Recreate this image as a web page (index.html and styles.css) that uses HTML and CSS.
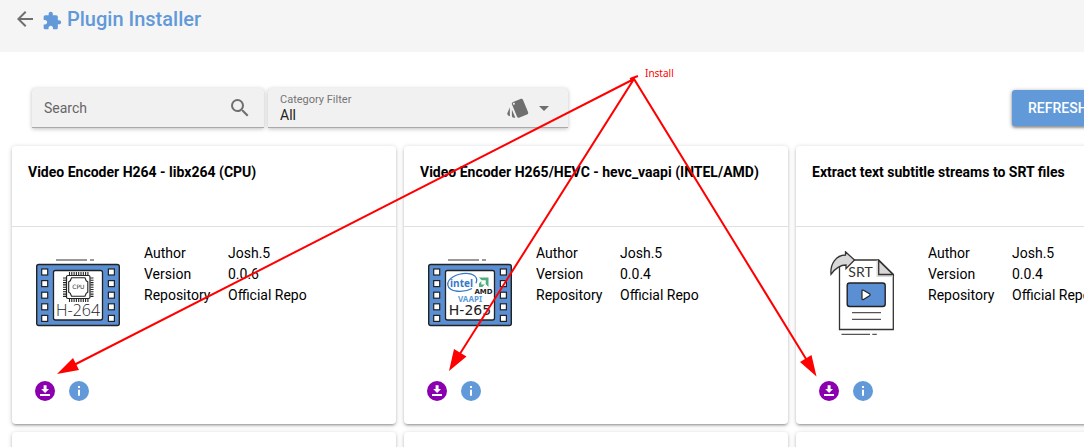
FILE: index.html
```html
<!DOCTYPE html>
<html lang="en">
<head>
<meta charset="utf-8">
<title>Plugin Installer</title>
<link rel="stylesheet" href="styles.css">
</head>
<body>
<svg class="defs" aria-hidden="true">
  <defs>
    <g id="film">
      <path d="M20 9H51M54 9H58" fill="none" stroke="#333"/>
      <rect x=".7" y="13.5" width="82.6" height="61" rx="2" fill="#5b8fd3" stroke="#222" stroke-width="1.4"/>
      <rect x="17.5" y="19.5" width="49" height="49.5" rx="2" fill="#fff" stroke="#222" stroke-width="1.3"/>
      <g fill="#fff" stroke="#222" stroke-width="1.2">
        <rect x="5.7" y="18" width="6" height="6"/><rect x="5.7" y="29.6" width="6" height="6"/><rect x="5.7" y="41.2" width="6" height="6"/><rect x="5.7" y="52.8" width="6" height="6"/><rect x="5.7" y="64.4" width="6" height="6"/>
        <rect x="72.4" y="18" width="6" height="6"/><rect x="72.4" y="29.6" width="6" height="6"/><rect x="72.4" y="41.2" width="6" height="6"/><rect x="72.4" y="52.8" width="6" height="6"/><rect x="72.4" y="64.4" width="6" height="6"/>
      </g>
    </g>
    <g id="download">
      <circle cx="10" cy="10" r="10" fill="#8a00ae"/>
      <path d="M8.6 4.3h3V8H14l-3.9 4L6.2 8h2.4zM5 13h10v2H5z" fill="#fff"/>
    </g>
    <g id="info">
      <circle cx="10" cy="10" r="10" fill="#6199d9"/>
      <path d="M9 5h2v2H9zM9 8.8h2v6H9z" fill="#fff"/>
    </g>
  </defs>
</svg>

<header class="header">
  <button class="back" aria-label="Back"><svg class="icon" viewBox="0 0 24 24"><path d="M20 11H7.83l5.59-5.59L12 4l-8 8 8 8 1.41-1.41L7.83 13H20v-2z"/></svg></button>
  <svg class="icon puzzle" viewBox="0 0 24 24"><path d="M20.500 11H19V7c0-1.100-.9-2-2-2h-4V3.500C13 2.120 11.880 1 10.500 1S8 2.120 8 3.500V5H4c-1.100 0-1.990.9-1.990 2v3.800H3.500c1.490 0 2.700 1.210 2.700 2.700s-1.210 2.700-2.700 2.700H2V20c0 1.100.9 2 2 2h3.800v-1.500c0-1.490 1.210-2.700 2.700-2.700s2.700 1.210 2.700 2.700V22H17c1.100 0 2-.9 2-2v-4h1.500c1.380 0 2.500-1.120 2.500-2.500S21.880 11 20.500 11z"/></svg>
  <h1 class="title">Plugin Installer</h1>
</header>

<main class="page">
  <div class="toolbar">
    <div class="field search">
      <input class="search-input" type="text" placeholder="Search" aria-label="Search">
      <svg class="icon" viewBox="0 0 24 24"><path d="M15.500 14h-.79l-.28-.27A6.471 6.471 0 0 0 16 9.500 6.500 6.500 0 1 0 9.500 16c1.610 0 3.090-.59 4.230-1.570l.27.28v.79l5 4.990L20.490 19l-4.990-5zm-6 0C7.010 14 5 11.990 5 9.500S7.010 5 9.500 5 14 7.010 14 9.500 11.990 14 9.500 14z"/></svg>
    </div>
    <div class="field filter">
      <div class="filter-body">
        <label class="filter-label" for="category">Category Filter</label>
        <select class="filter-select" id="category"><option>All</option></select>
      </div>
      <svg class="icon" viewBox="0 0 24 24"><path d="M2.530 19.650l1.340.56v-9.030l-2.430 5.860c-.41 1.020.08 2.190 1.090 2.610zm19.500-3.700L17.070 3.980a2.013 2.013 0 0 0-1.810-1.230c-.26 0-.53.04-.79.15L7.100 5.950a1.999 1.999 0 0 0-1.080 2.600l4.960 11.970a1.998 1.998 0 0 0 2.600 1.080l7.360-3.050a1.994 1.994 0 0 0 1.090-2.600zM7.880 8.750c-.55 0-1-.45-1-1s.45-1 1-1 1 .45 1 1-.45 1-1 1zm-2 11c0 1.100.9 2 2 2h1.450l-3.450-8.340v6.340z"/></svg>
      <svg class="icon" viewBox="0 0 24 24"><path d="M7 10l5 5 5-5z"/></svg>
    </div>
    <button class="refresh">REFRESH</button>
  </div>

  <div class="cards">
    <article class="card">
      <h2 class="card-title">Video Encoder H264 - libx264 (CPU)</h2>
      <div class="card-body">
        <svg class="art" viewBox="0 0 84 84">
          <use href="#film"/>
          <path d="M33.500 24v-3M35.800 24v-3M38.100 24v-3M40.400 24v-3M42.700 24v-3M45 24v-3M47.300 24v-3M49.600 24v-3M51.900 24v-3M33.500 51v-3M35.800 51v-3M38.100 51v-3M40.400 51v-3M42.700 51v-3M45 51v-3M47.300 51v-3M49.600 51v-3M51.900 51v-3M27 27h3M27 29.300h3M27 31.600h3M27 33.900h3M27 36.200h3M27 38.500h3M27 40.800h3M27 43.100h3M27 45.400h3M54.500 27h3M54.500 29.300h3M54.500 31.600h3M54.500 33.900h3M54.500 36.200h3M54.500 38.500h3M54.500 40.800h3M54.500 43.100h3M54.500 45.400h3" stroke="#222" stroke-width="1.100"/>
          <rect x="30.500" y="24.500" width="23.500" height="23" rx="1.500" fill="#fff" stroke="#222" stroke-width="1.200"/>
          <path d="M35.500 26.800h13.500l1.200 3 1.600 1v10.500l-1.600 1-1.200 3H35.500l-1.200-3-1.600-1V30.800l1.600-1z" fill="#fff" stroke="#222" stroke-width="1.100"/>
          <text class="art-cpu" x="42.300" y="38" text-anchor="middle">CPU</text>
          <text class="art-codec light" x="42" y="65" text-anchor="middle">H-264</text>
        </svg>
        <table class="facts">
          <tr><th scope="row">Author</th><td>Josh.5</td></tr>
          <tr><th scope="row">Version</th><td>0.0.6</td></tr>
          <tr><th scope="row">Repository</th><td>Official Repo</td></tr>
        </table>
      </div>
      <div class="actions">
        <button class="action" aria-label="Install"><svg viewBox="0 0 20 20"><use href="#download"/></svg></button>
        <button class="action" aria-label="Info"><svg viewBox="0 0 20 20"><use href="#info"/></svg></button>
      </div>
    </article>

    <article class="card">
      <h2 class="card-title">Video Encoder H265/HEVC - hevc_vaapi (INTEL/AMD)</h2>
      <div class="card-body">
        <svg class="art" viewBox="0 0 84 84">
          <use href="#film"/>
          <path d="M44 37.500C36 42 21 41.500 19.800 34 19 27.500 29 22.300 38 22.300c8 0 12.500 4.200 10 10" fill="none" stroke="#3579c6" stroke-width="1.300"/>
          <text class="art-intel" x="33.500" y="35.500" text-anchor="middle">intel</text>
          <path d="M51 26.500h9.500V36l-2.800-2.800v-4h-4zM53.300 30v3.500h3.500L54.300 36H51v-3.500z" fill="#4fae7c"/>
          <text class="art-amd" x="55.500" y="43" text-anchor="middle">AMD</text>
          <text class="art-vaapi" x="42" y="51" text-anchor="middle">VAAPI</text>
          <text class="art-codec" x="42" y="64" text-anchor="middle">H-265</text>
        </svg>
        <table class="facts">
          <tr><th scope="row">Author</th><td>Josh.5</td></tr>
          <tr><th scope="row">Version</th><td>0.0.4</td></tr>
          <tr><th scope="row">Repository</th><td>Official Repo</td></tr>
        </table>
      </div>
      <div class="actions">
        <button class="action" aria-label="Install"><svg viewBox="0 0 20 20"><use href="#download"/></svg></button>
        <button class="action" aria-label="Info"><svg viewBox="0 0 20 20"><use href="#info"/></svg></button>
      </div>
    </article>

    <article class="card">
      <h2 class="card-title">Extract text subtitle streams to SRT files</h2>
      <div class="card-body">
        <svg class="art" viewBox="0 0 84 84">
          <path d="M19.500 9h39.200l14.600 14.200v55.300H19.500z" fill="#fff" stroke="#333" stroke-width="1.300"/>
          <path d="M56.500 9.600h2.200v13.900h14V26H56.500z" fill="#d8d8d8"/>
          <path d="M58.700 9.500v14h14.300z" fill="#d8d8d8" stroke="#333" stroke-width="1.300"/>
          <path d="M11 23.300C10 13 16 4 25.500 4V.8L34.500 9 26 17.700V14c-6 0-10.500 3-15 9.300z" fill="#d8d8d8" stroke="#333" stroke-width="1.300"/>
          <text class="art-srt" x="40.500" y="26" text-anchor="middle">SRT</text>
          <rect x="27.200" y="32" width="38" height="23.500" rx="2.500" fill="#5b8fd3" stroke="#222" stroke-width="1.400"/>
          <path d="M42 40q0-1.500 1.500-.8l6 3.600q1.200 1 0 2l-6 3.600q-1.500.7-1.500-.8z" fill="#fff" stroke="#222" stroke-width="1.200"/>
          <path d="M32 61.700h29M32 68.300h29M21.500 83.300H50M52.300 83.300h4.500" stroke="#555" stroke-width="1.200"/>
        </svg>
        <table class="facts">
          <tr><th scope="row">Author</th><td>Josh.5</td></tr>
          <tr><th scope="row">Version</th><td>0.0.4</td></tr>
          <tr><th scope="row">Repository</th><td>Official Repo</td></tr>
        </table>
      </div>
      <div class="actions">
        <button class="action" aria-label="Install"><svg viewBox="0 0 20 20"><use href="#download"/></svg></button>
        <button class="action" aria-label="Info"><svg viewBox="0 0 20 20"><use href="#info"/></svg></button>
      </div>
    </article>

    <article class="card"></article>
    <article class="card"></article>
    <article class="card"></article>
  </div>
</main>

<!-- Callout arrows pointing at the install buttons -->
<svg class="callout" width="1084" height="447" viewBox="0 0 1084 447">
  <path d="M70 367L634 79M456 360L634 79L811 367M630 79L638 76" fill="none" stroke="#f00" stroke-width="2"/>
  <path d="M57 374L73 358L79 370zM449 371L454 349L466.500 356.500zM816.500 376.500L800 362L811.500 355z" fill="#f00"/>
  <text class="callout-text" x="645" y="77">Install</text>
</svg>
</body>
</html>
```

FILE: styles.css
```css
* {
  box-sizing: border-box;
}

body {
  margin: 0;
  height: 100vh;
  overflow: hidden;
  position: relative;
  background: #fff;
  color: #000;
  font: 14px/21px Roboto, sans-serif;
}

button {
  border: 0;
  padding: 0;
  background: none;
  font: inherit;
  cursor: pointer;
}

svg {
  display: block;
}

.defs {
  position: absolute;
  width: 0;
  height: 0;
}

.icon {
  width: 24px;
  height: 24px;
  flex: none;
  fill: #6f6f6f;
}

.header {
  display: flex;
  align-items: flex-start;
  height: 52px;
  padding: 7px 13px;
  background: #f5f5f5;
}

.puzzle {
  width: 20px;
  height: 20px;
  margin: 4px 5px 0;
  fill: #6199d9;
}

.title {
  margin: 0;
  color: #6199d9;
  font-size: 20px;
  font-weight: 500;
  line-height: 24px;
}

.page {
  padding: 36px 12px 0;
}

.toolbar {
  display: flex;
  align-items: center;
  gap: 4px;
  min-width: 1160px;
  padding: 0 0 0 20px;
}

.field {
  display: flex;
  align-items: center;
  height: 40px;
  padding: 0 12px;
  background: #f1f1f1;
  border-radius: 4px 4px 0 0;
  box-shadow: inset 0 -1px #aaa, 0 1px 4px rgba(0, 0, 0, 0.25);
}

.search {
  width: 232px;
}

.search-input {
  flex: 1;
  min-width: 0;
  border: 0;
  padding: 0;
  background: none;
  font: inherit;
  outline: 0;
}

.search-input::placeholder {
  color: #666;
  opacity: 1;
}

.filter {
  width: 300px;
  gap: 2px;
}

.filter-body {
  display: flex;
  flex: 1;
  flex-direction: column;
}

.filter-label {
  color: #757575;
  font-size: 11px;
  line-height: 14px;
}

.filter-select {
  appearance: none;
  border: 0;
  padding: 0;
  background: none;
  color: #222;
  font: inherit;
  line-height: 16px;
}

.refresh {
  width: 160px;
  height: 36px;
  margin-left: auto;
  padding: 0 16px;
  border-radius: 3px;
  background: #6199d9;
  color: #fff;
  font-weight: 500;
  text-align: left;
  box-shadow: 0 1px 4px rgba(0, 0, 0, 0.4), 0 2px 2px rgba(0, 0, 0, 0.2);
}

.cards {
  display: grid;
  grid-template-columns: repeat(3, 384px);
  grid-auto-rows: 278px;
  gap: 8px;
  padding-top: 18px;
}

.card {
  border-radius: 4px;
  background: #fff;
  box-shadow: 0 1px 5px rgba(0, 0, 0, 0.2), 0 2px 2px rgba(0, 0, 0, 0.14), 0 3px 1px -2px rgba(0, 0, 0, 0.12);
}

.card-title {
  height: 81px;
  margin: 0;
  padding: 16px;
  border-bottom: 1px solid #e0e0e0;
  font-size: 14px;
  font-weight: 700;
  line-height: 20px;
}

.card-body {
  display: flex;
  gap: 24px;
  height: 127px;
  padding: 16px 24px;
}

.art {
  width: 84px;
  height: 84px;
  margin-top: 8px;
  flex: none;
}

.art-cpu {
  fill: #333;
  font: 6px "DejaVu Sans", sans-serif;
}

.art-codec {
  fill: #222;
  font: 14px "DejaVu Sans", sans-serif;
}

.light {
  font: 300 16px "Open Sans", sans-serif;
}

.art-intel {
  fill: #3579c6;
  font: 700 10px "Open Sans", sans-serif;
}

.art-amd {
  fill: #222;
  font: 700 7px "DejaVu Sans", sans-serif;
}

.art-vaapi {
  fill: #5b9bd9;
  font: 700 8px "Noto Sans", sans-serif;
}

.art-srt {
  fill: #333;
  font: 14px Lato, sans-serif;
}

.facts {
  align-self: flex-start;
  border-collapse: collapse;
}

.facts th,
.facts td {
  padding: 0;
  font-weight: 400;
  text-align: left;
}

.facts th {
  width: 84px;
}

.actions {
  display: flex;
  gap: 14px;
  padding: 27px 23px;
}

.action,
.action svg {
  width: 20px;
  height: 20px;
}

.callout {
  position: absolute;
  top: 0;
  left: 0;
  pointer-events: none;
}

.callout-text {
  fill: #f00;
  font: 10px "Noto Sans", sans-serif;
}
```
